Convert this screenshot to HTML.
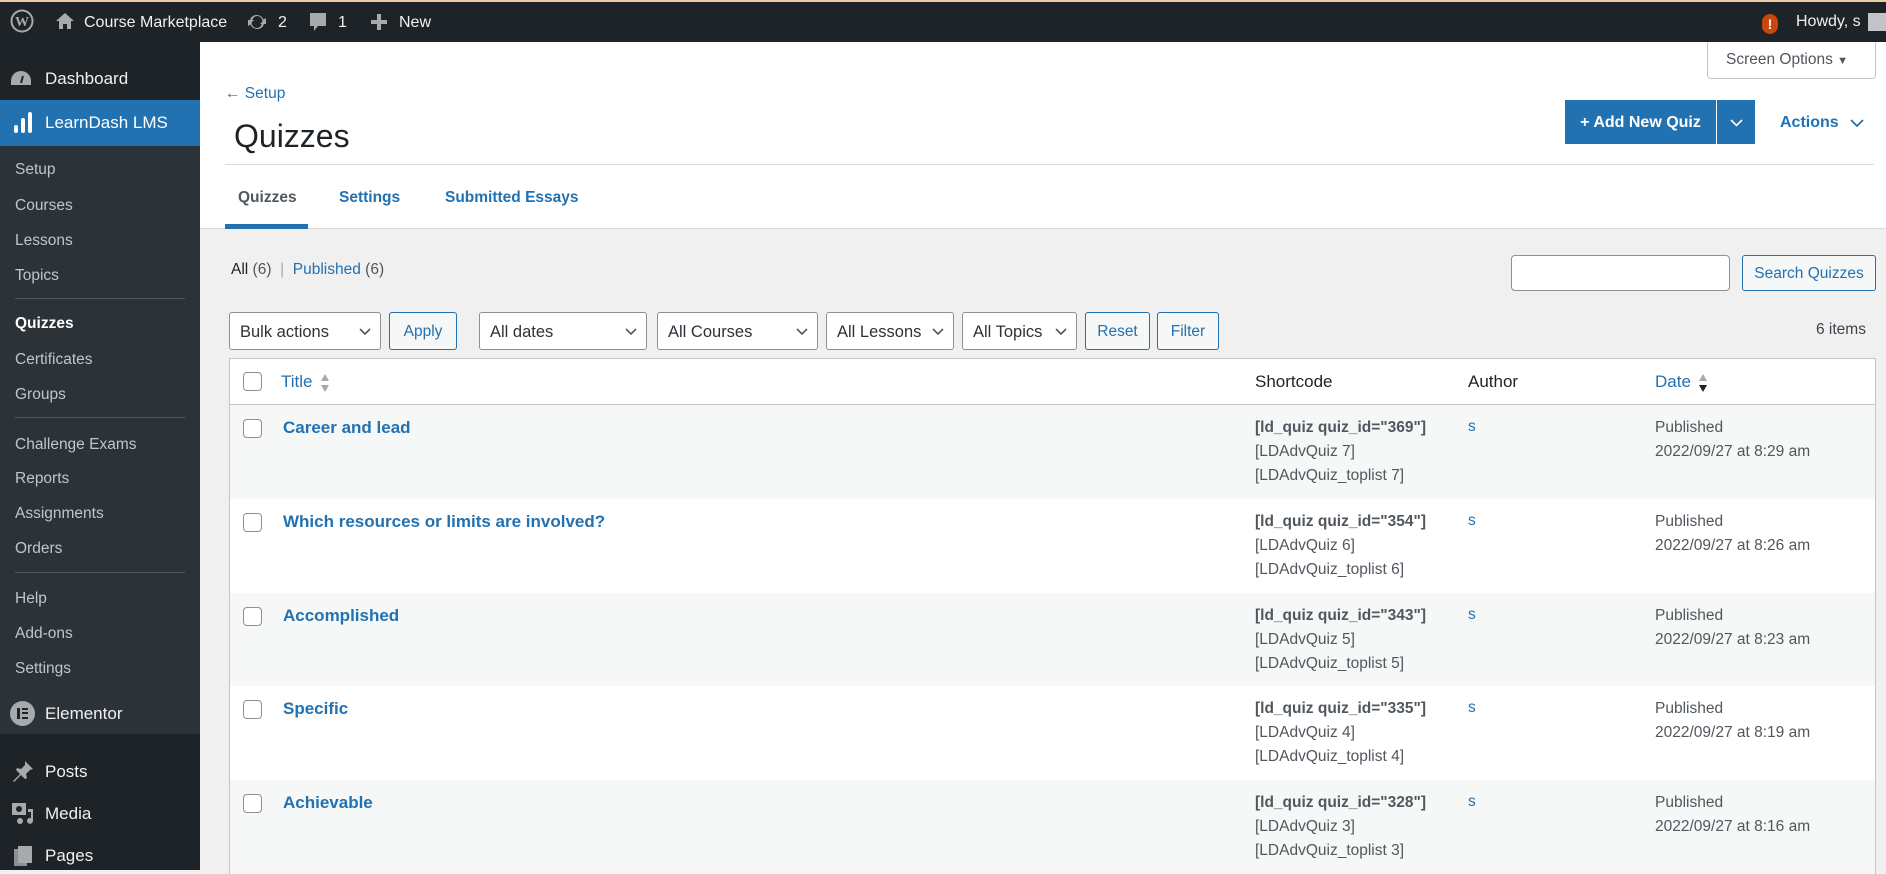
<!DOCTYPE html>
<html><head><meta charset="utf-8"><style>
*{box-sizing:border-box;margin:0;padding:0}
body{width:1886px;height:870px;overflow:hidden;background:#f0f0f1;font-family:"Liberation Sans",sans-serif;color:#3c434a;position:relative}
.a{position:absolute;white-space:nowrap}
#bar{position:absolute;left:0;top:0;width:1886px;height:42px;background:#1d2327;border-top:2px solid #e9cfa6;color:#f0f0f1;font-size:16px}
#side{position:absolute;left:0;top:42px;width:200px;height:828px;background:#1d2327;color:#f0f0f1}
.sub{position:absolute;left:0;top:104px;width:200px;height:588px;background:#2c3338}
.si{position:absolute;left:15px;font-size:15.5px;color:#c3c4c7}
.sep{position:absolute;left:15px;width:170px;height:1px;background:#50575e}
.top{position:absolute;left:45px;font-size:17px;color:#f0f0f1}
#head{position:absolute;left:200px;top:42px;width:1686px;height:187px;background:#fff;border-bottom:1px solid #dcdcde}
.btn{position:absolute;height:38px;border:1px solid #2271b1;border-radius:3px;background:#f6f7f7;color:#2271b1;font-size:15.5px;line-height:38px;text-align:center}
.sel{position:absolute;height:38px;border:1px solid #8c8f94;border-radius:3px;background:#fff;color:#2c3338;font-size:16.5px;line-height:38px;padding-left:10px}
.sel svg{position:absolute;right:9px;top:15px}
.row{position:absolute;left:229px;width:1647px;height:94px;border-left:1px solid #c3c4c7;border-right:1px solid #c3c4c7}
.cb{position:absolute;left:13px;width:19px;height:19px;border:1px solid #8c8f94;border-radius:4px;background:#fff}
.t{position:absolute;left:53px;font-size:17px;font-weight:bold;color:#2271b1}
.sc{position:absolute;left:1025px;font-size:15.5px;line-height:24px;color:#50575e}
.au{position:absolute;left:1238px;font-size:15.5px;color:#2271b1}
.dt{position:absolute;left:1425px;font-size:15.5px;line-height:24px;color:#50575e}
</style></head><body>
<div id="bar">
<svg class="a" style="left:10px;top:7px" width="24" height="24" viewBox="0 0 24 24"><circle cx="12" cy="12" r="10.5" fill="none" stroke="#a7aaad" stroke-width="2"/><text x="12" y="17" font-size="14" font-weight="bold" text-anchor="middle" fill="#a7aaad" font-family="Liberation Serif">W</text></svg>
<svg class="a" style="left:55px;top:10px" width="20" height="18" viewBox="0 0 20 18"><path d="M10 1L1 9h3v8h4v-5h4v5h4V9h3z" fill="#a7aaad"/></svg>
<span class="a" style="left:84px;top:12px">Course Marketplace</span>
<svg class="a" style="left:247px;top:10px" width="20" height="20" viewBox="0 0 20 20"><path d="M10 3a7 7 0 0 1 6.5 4.5L19 6v6h-6l2.3-2.3A5 5 0 0 0 5.2 8.5L3 7.6A7 7 0 0 1 10 3zM10 17a7 7 0 0 1-6.5-4.5L1 14V8h6L4.7 10.3a5 5 0 0 0 10.1 1.2l2.2.9A7 7 0 0 1 10 17z" fill="#a7aaad"/></svg>
<span class="a" style="left:278px;top:12px">2</span>
<svg class="a" style="left:309px;top:10px" width="18" height="22" viewBox="0 0 18 22"><path d="M1 1h16v13H9l-4 5v-5H1z" fill="#a7aaad"/></svg>
<span class="a" style="left:338px;top:12px">1</span>
<svg class="a" style="left:370px;top:11px" width="18" height="18" viewBox="0 0 18 18"><path d="M7 1h4v6h6v4h-6v6H7v-6H1V7h6z" fill="#a7aaad"/></svg>
<span class="a" style="left:399px;top:12px">New</span>
<div class="a" style="left:1762px;top:12px;width:16px;height:20px;border-radius:8px;background:#c9460c;color:#fff;font-weight:bold;font-size:14px;text-align:center;line-height:20px">!</div>
<span class="a" style="left:1796px;top:11px">Howdy, s</span>
<div class="a" style="left:1868px;top:11px;width:18px;height:18px;background:#c3c4c7"></div>
</div>

<div id="side">
<svg class="a" style="left:10px;top:27px" width="22" height="20" viewBox="0 0 22 20"><path d="M11 2a10 10 0 0 0-10 10v4h20v-4A10 10 0 0 0 11 2z" fill="#a7aaad"/><path d="M11 14l2-7" stroke="#1d2327" stroke-width="2"/></svg>
<span class="top" style="top:27px">Dashboard</span>
<div class="a" style="left:0;top:58px;width:200px;height:46px;background:#2271b1"></div>
<svg class="a" style="left:13px;top:68px" width="20" height="24" viewBox="0 0 20 24"><rect x="1" y="15" width="4" height="8" rx="2" fill="#fff"/><rect x="8" y="8" width="4" height="15" rx="2" fill="#fff"/><rect x="15" y="2" width="4" height="21" rx="2" fill="#fff"/></svg>
<span class="top" style="top:71px;color:#fff">LearnDash LMS</span>
<div class="sub">
<span class="si" style="top:15px">Setup</span>
<span class="si" style="top:51px">Courses</span>
<span class="si" style="top:86px">Lessons</span>
<span class="si" style="top:121px">Topics</span>
<div class="sep" style="top:152px"></div>
<span class="si" style="top:169px;color:#fff;font-weight:bold">Quizzes</span>
<span class="si" style="top:205px">Certificates</span>
<span class="si" style="top:240px">Groups</span>
<div class="sep" style="top:271px"></div>
<span class="si" style="top:290px">Challenge Exams</span>
<span class="si" style="top:324px">Reports</span>
<span class="si" style="top:359px">Assignments</span>
<span class="si" style="top:394px">Orders</span>
<div class="sep" style="top:426px"></div>
<span class="si" style="top:444px">Help</span>
<span class="si" style="top:479px">Add-ons</span>
<span class="si" style="top:514px">Settings</span>
</div>
<div class="a" style="left:10px;top:659px;width:25px;height:25px;border-radius:50%;background:#a7aaad"></div>
<div class="a" style="left:17px;top:666px;width:3px;height:11px;background:#1d2327"></div>
<div class="a" style="left:22px;top:666px;width:6px;height:2px;background:#1d2327;box-shadow:0 4px 0 #1d2327,0 9px 0 #1d2327"></div>
<span class="top" style="top:662px">Elementor</span>
<svg class="a" style="left:11px;top:717px" width="24" height="24" viewBox="0 0 24 24"><path d="M14 2l8 8-3 1-4 4 1 4-2 1-4-4-7 7-1-1 7-7-4-4 1-2 4 1 4-4z" fill="#a7aaad"/></svg>
<span class="top" style="top:720px">Posts</span>
<svg class="a" style="left:11px;top:759px" width="24" height="24" viewBox="0 0 24 24"><rect x="1" y="2" width="14" height="12" fill="#a7aaad"/><circle cx="8" cy="8" r="3" fill="#1d2327"/><path d="M17 8h5v12a3 3 0 1 1-2-3V11h-3z" fill="#a7aaad"/><circle cx="9" cy="20" r="3" fill="#a7aaad"/></svg>
<span class="top" style="top:762px">Media</span>
<svg class="a" style="left:13px;top:803px" width="20" height="22" viewBox="0 0 20 22"><rect x="1" y="4" width="13" height="17" fill="#8c8f94"/><rect x="5" y="1" width="14" height="17" fill="#a7aaad"/></svg>
<span class="top" style="top:804px">Pages</span>
</div>

<div id="head">
<span class="a" style="left:25px;top:43px;font-size:15.5px;color:#2271b1">← Setup</span>
<span class="a" style="left:34px;top:76px;font-size:32px;color:#1d2327">Quizzes</span>
<div class="a" style="left:25px;top:122px;width:1649px;height:1px;background:#dcdcde"></div>
<span class="a" style="left:38px;top:147px;font-size:15.5px;font-weight:bold;color:#50575e">Quizzes</span>
<div class="a" style="left:25px;top:182px;width:83px;height:5px;background:#2271b1"></div>
<span class="a" style="left:139px;top:147px;font-size:15.5px;font-weight:bold;color:#2271b1">Settings</span>
<span class="a" style="left:245px;top:147px;font-size:15.5px;font-weight:bold;color:#2271b1">Submitted Essays</span>
<div class="a" style="left:1507px;top:0;width:169px;height:37px;border:1px solid #c3c4c7;border-top:none;border-radius:0 0 4px 4px;color:#50575e;font-size:15.5px;line-height:36px;padding-left:18px">Screen Options <span style="font-size:11px">▼</span></div>
<div class="a" style="left:1365px;top:58px;width:151px;height:44px;background:#2271b1;color:#fff;font-weight:bold;font-size:16px;line-height:46px;text-align:center">+ Add New Quiz</div>
<div class="a" style="left:1517px;top:58px;width:38px;height:44px;background:#2271b1"><svg style="position:absolute;left:13px;top:19px" width="13" height="8" viewBox="0 0 13 8"><path d="M1 1l5.5 5.5L12 1" fill="none" stroke="#fff" stroke-width="1.6"/></svg></div>
<span class="a" style="left:1580px;top:72px;font-size:16px;font-weight:bold;color:#2271b1">Actions</span>
<svg class="a" style="left:1650px;top:77px" width="14" height="9" viewBox="0 0 14 9"><path d="M1 1l6 6 6-6" fill="none" stroke="#2271b1" stroke-width="1.8"/></svg>
</div>

<span class="a" style="left:231px;top:261px;font-size:15.5px;color:#1d2327">All <span style="color:#50575e">(6)</span> <span style="color:#a7aaad">&nbsp;|&nbsp;</span> <span style="color:#2271b1">Published</span> <span style="color:#50575e">(6)</span></span>
<div class="a" style="left:1511px;top:255px;width:219px;height:36px;border:1px solid #8c8f94;border-radius:4px;background:#fff"></div>
<div class="btn" style="left:1742px;top:255px;width:134px;height:36px;line-height:36px">Search Quizzes</div>

<div class="sel" style="left:229px;top:312px;width:152px">Bulk actions<svg width="12" height="8" viewBox="0 0 12 8"><path d="M1 1l5 5 5-5" fill="none" stroke="#50575e" stroke-width="1.6"/></svg></div>
<div class="btn" style="left:389px;top:312px;width:68px">Apply</div>
<div class="sel" style="left:479px;top:312px;width:168px">All dates<svg width="12" height="8" viewBox="0 0 12 8"><path d="M1 1l5 5 5-5" fill="none" stroke="#50575e" stroke-width="1.6"/></svg></div>
<div class="sel" style="left:657px;top:312px;width:161px">All Courses<svg width="12" height="8" viewBox="0 0 12 8"><path d="M1 1l5 5 5-5" fill="none" stroke="#50575e" stroke-width="1.6"/></svg></div>
<div class="sel" style="left:826px;top:312px;width:128px">All Lessons<svg width="12" height="8" viewBox="0 0 12 8"><path d="M1 1l5 5 5-5" fill="none" stroke="#50575e" stroke-width="1.6"/></svg></div>
<div class="sel" style="left:962px;top:312px;width:115px">All Topics<svg width="12" height="8" viewBox="0 0 12 8"><path d="M1 1l5 5 5-5" fill="none" stroke="#50575e" stroke-width="1.6"/></svg></div>
<div class="btn" style="left:1085px;top:312px;width:65px">Reset</div>
<div class="btn" style="left:1157px;top:312px;width:62px">Filter</div>
<span class="a" style="left:1816px;top:321px;font-size:15.5px;color:#3c434a">6 items</span>

<div class="row" style="top:358px;height:47px;background:#fff;border-top:1px solid #c3c4c7;border-bottom:1px solid #c3c4c7">
<div class="cb" style="top:13px"></div>
<span class="a" style="left:51px;top:13px;font-size:17px;color:#2271b1">Title</span>
<svg class="a" style="left:90px;top:14px" width="10" height="20" viewBox="0 0 10 20"><path d="M5 1l4 7H1z M5 19l4-7H1z" fill="#a7aaad"/></svg>
<span class="a" style="left:1025px;top:13px;font-size:17px;color:#1d2327">Shortcode</span>
<span class="a" style="left:1238px;top:13px;font-size:17px;color:#1d2327">Author</span>
<span class="a" style="left:1425px;top:13px;font-size:17px;color:#2271b1">Date</span>
<svg class="a" style="left:1468px;top:14px" width="10" height="20" viewBox="0 0 10 20"><path d="M5 1l4 7H1z" fill="#a7aaad"/><path d="M5 19l4-7H1z" fill="#1d2327"/></svg>
</div>

<div class="row" style="top:405px;background:#f6f7f7"><div class="cb" style="top:14px"></div><span class="t" style="top:13px">Career and lead</span><div class="sc" style="top:11px"><b>[ld_quiz quiz_id="369"]</b><br>[LDAdvQuiz 7]<br>[LDAdvQuiz_toplist 7]</div><span class="au" style="top:13px">s</span><div class="dt" style="top:11px">Published<br>2022/09/27 at 8:29 am</div></div>
<div class="row" style="top:499px;background:#fff"><div class="cb" style="top:14px"></div><span class="t" style="top:13px">Which resources or limits are involved?</span><div class="sc" style="top:11px"><b>[ld_quiz quiz_id="354"]</b><br>[LDAdvQuiz 6]<br>[LDAdvQuiz_toplist 6]</div><span class="au" style="top:13px">s</span><div class="dt" style="top:11px">Published<br>2022/09/27 at 8:26 am</div></div>
<div class="row" style="top:593px;background:#f6f7f7"><div class="cb" style="top:14px"></div><span class="t" style="top:13px">Accomplished</span><div class="sc" style="top:11px"><b>[ld_quiz quiz_id="343"]</b><br>[LDAdvQuiz 5]<br>[LDAdvQuiz_toplist 5]</div><span class="au" style="top:13px">s</span><div class="dt" style="top:11px">Published<br>2022/09/27 at 8:23 am</div></div>
<div class="row" style="top:686px;background:#fff"><div class="cb" style="top:14px"></div><span class="t" style="top:13px">Specific</span><div class="sc" style="top:11px"><b>[ld_quiz quiz_id="335"]</b><br>[LDAdvQuiz 4]<br>[LDAdvQuiz_toplist 4]</div><span class="au" style="top:13px">s</span><div class="dt" style="top:11px">Published<br>2022/09/27 at 8:19 am</div></div>
<div class="row" style="top:780px;background:#f6f7f7"><div class="cb" style="top:14px"></div><span class="t" style="top:13px">Achievable</span><div class="sc" style="top:11px"><b>[ld_quiz quiz_id="328"]</b><br>[LDAdvQuiz 3]<br>[LDAdvQuiz_toplist 3]</div><span class="au" style="top:13px">s</span><div class="dt" style="top:11px">Published<br>2022/09/27 at 8:16 am</div></div>
</body></html>
